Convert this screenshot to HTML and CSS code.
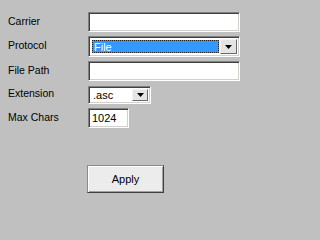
FILE: index.html
```html
<!DOCTYPE html>
<html>
<head>
<meta charset="utf-8">
<link rel="stylesheet" href="styles.css">
</head>
<body>
<div class="form">
  <div class="row r1">
    <span class="label">Carrier</span>
    <div class="field text wide"></div>
  </div>
  <div class="row r2">
    <span class="label">Protocol</span>
    <div class="field combo wide">
      <div class="value selected"><span>File</span></div>
      <div class="drop"><svg width="7" height="4" viewBox="0 0 7 4"><path d="M0 0H7L3.5 4Z" fill="#000"/></svg></div>
    </div>
  </div>
  <div class="row r3">
    <span class="label">File Path</span>
    <div class="field text wide"></div>
  </div>
  <div class="row r4">
    <span class="label">Extension</span>
    <div class="field combo ext">
      <div class="value"><span>.asc</span></div>
      <div class="drop"><svg width="7" height="4" viewBox="0 0 7 4"><path d="M0 0H7L3.5 4Z" fill="#000"/></svg></div>
    </div>
  </div>
  <div class="row r5">
    <span class="label">Max Chars</span>
    <div class="field text small"><span class="txt">1024</span></div>
  </div>
  <div class="actions">
    <button class="btn">Apply</button>
  </div>
</div>
</body>
</html>
```
FILE: styles.css
```css
html, body {
  margin: 0;
  padding: 0;
  background: #c0c0c0;
}
body {
  width: 251px;
  height: 203px;
  overflow: hidden;
  font-family: "Liberation Sans", Arial, sans-serif;
  color: #000;
}
.form {
  padding: 12px 0 0 8px;
  display: flex;
  flex-direction: column;
}
.row {
  display: grid;
  grid-template-columns: 80px auto;
  align-items: start;
}
.label {
  font-size: 10.5px;
  line-height: 14px;
  padding-top: 2px;
}
.r1 { height: 24px; }
.r2 { height: 25px; }
.r3 { height: 25px; }
.r4 { height: 22px; }
.r4 .label { padding-top: 0; }
.r5 { height: 57px; }
.field {
  box-sizing: border-box;
  background: #fff;
  border: 1px solid;
  border-color: #808080 #fff #fff #808080;
  box-shadow: inset 1px 1px #404040, inset -1px -1px #d4d0c8;
  font-size: 11px;
}
.wide { width: 152px; }
.text { height: 20px; }
.r2 .field { height: 21px; }
.ext { width: 63px; height: 18px; }
.small { width: 41px; height: 20px; display: flex; align-items: center; padding-left: 3px; }
.combo {
  display: flex;
  padding: 2px;
  gap: 1px;
}
.value {
  flex: 1;
  display: flex;
  align-items: center;
  padding-left: 2px;
  line-height: 12px;
}
.selected {
  background: #3399ff;
  color: #fff;
  outline: 1px dotted #222;
  outline-offset: -1px;
  margin: 1px 0 1px 1px;
}
.drop {
  width: 17px;
  box-sizing: border-box;
  background: #e4e4e4;
  border: 1px solid;
  border-color: #f4f4f4 #6a6a6a #6a6a6a #f4f4f4;
  display: flex;
  align-items: center;
  justify-content: center;
}
.ext .drop { width: 16px; }
.actions {
  padding-left: 79px;
}
.btn {
  width: 77px;
  height: 28px;
  box-sizing: border-box;
  background: #ececec;
  border: 1px solid;
  border-color: #8a8a8a #404040 #404040 #8a8a8a;
  box-shadow: inset 1px 1px #fff, inset -1px -1px #a0a0a0;
  font-family: "Liberation Sans", Arial, sans-serif;
  font-size: 11px;
  color: #000;
  padding: 0;
}
```
